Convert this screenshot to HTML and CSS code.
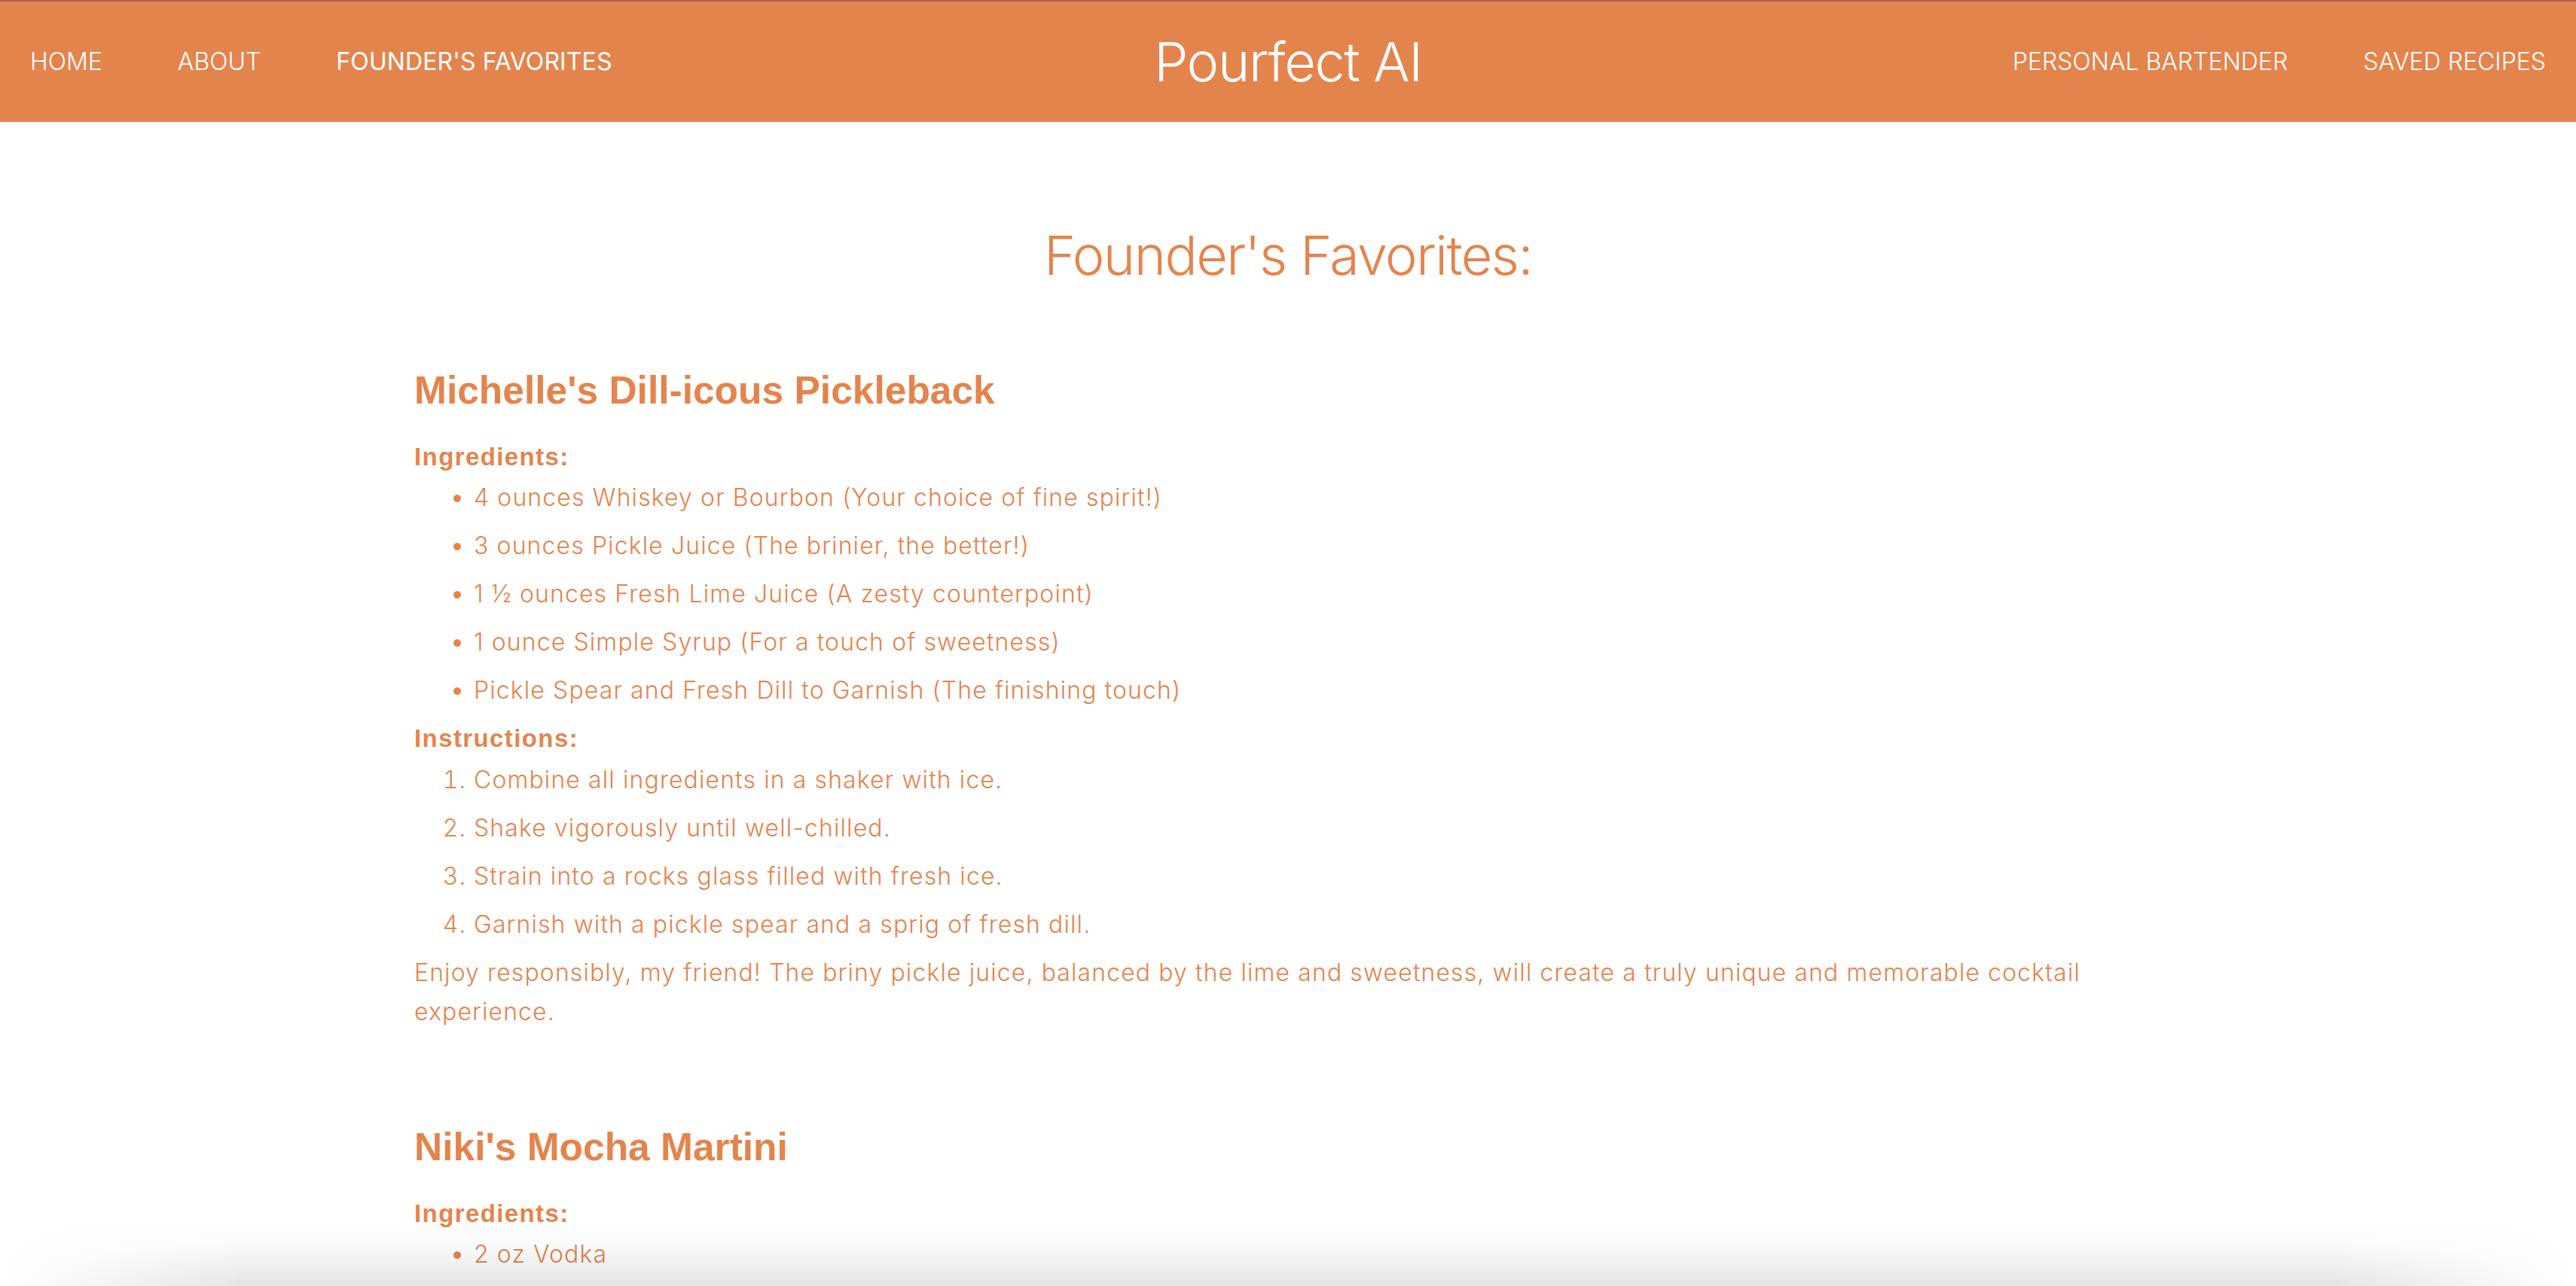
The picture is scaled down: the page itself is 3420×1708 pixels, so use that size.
FILE: index.html
```html
<!DOCTYPE html>
<html lang="en">
<head>
<meta charset="utf-8">
<title>Pourfect AI - Founder's Favorites</title>
<link rel="stylesheet" href="styles.css">
</head>
<body>
<header class="topbar">
  <nav class="nav nav-left">
    <a class="nav-link" href="#">HOME</a>
    <a class="nav-link" href="#">ABOUT</a>
    <a class="nav-link nav-link-active" href="#">FOUNDER'S FAVORITES</a>
  </nav>
  <div class="brand">Pourfect AI</div>
  <nav class="nav nav-right">
    <a class="nav-link" href="#">PERSONAL BARTENDER</a>
    <a class="nav-link" href="#">SAVED RECIPES</a>
  </nav>
</header>

<main class="content">
  <h1 class="page-title">Founder's Favorites:</h1>

  <section class="recipe">
    <h2 class="recipe-title">Michelle's Dill-icous Pickleback</h2>
    <h3 class="recipe-label">Ingredients:</h3>
    <ul class="recipe-list">
      <li>4 ounces Whiskey or Bourbon (Your choice of fine spirit!)</li>
      <li>3 ounces Pickle Juice (The brinier, the better!)</li>
      <li>1 ½ ounces Fresh Lime Juice (A zesty counterpoint)</li>
      <li>1 ounce Simple Syrup (For a touch of sweetness)</li>
      <li>Pickle Spear and Fresh Dill to Garnish (The finishing touch)</li>
    </ul>
    <h3 class="recipe-label">Instructions:</h3>
    <ol class="recipe-list">
      <li>Combine all ingredients in a shaker with ice.</li>
      <li>Shake vigorously until well-chilled.</li>
      <li>Strain into a rocks glass filled with fresh ice.</li>
      <li>Garnish with a pickle spear and a sprig of fresh dill.</li>
    </ol>
    <p class="recipe-note">Enjoy responsibly, my friend! The briny pickle juice, balanced by the lime and sweetness, will create a truly unique and memorable cocktail experience.</p>
  </section>

  <section class="recipe">
    <h2 class="recipe-title">Niki's Mocha Martini</h2>
    <h3 class="recipe-label">Ingredients:</h3>
    <ul class="recipe-list">
      <li>2 oz Vodka</li>
    </ul>
  </section>
</main>

<div class="window-shade"></div>
</body>
</html>
```

FILE: styles.css
```css
html, body {
  margin: 0;
  padding: 0;
  background: #ffffff;
}

body {
  font-family: "Liberation Sans", Arial, sans-serif;
  color: #e4844d;
  overflow: hidden;
}

.topbar {
  height: 160px;
  border-top: 2px solid #b85c52;
  background: #e4844d;
  display: flex;
  align-items: center;
  justify-content: space-between;
  padding: 0 40px;
  position: relative;
}

.nav {
  display: flex;
  gap: 100px;
  flex: 1;
}

.nav-right {
  justify-content: flex-end;
}

.nav-link {
  color: #ffffff;
  text-decoration: none;
  font-family: "Inter", "Liberation Sans", sans-serif;
  font-size: 32px;
  line-height: 40px;
  font-weight: 300;
  letter-spacing: 0;
}

.nav-link-active {
  font-weight: 400;
  letter-spacing: 0.1px;
}

.brand {
  color: #ffffff;
  font-family: "Inter", "Liberation Sans", sans-serif;
  font-size: 72px;
  line-height: 86px;
  font-weight: 300;
  letter-spacing: -1.4px;
  text-align: center;
}

.content {
  width: 2320px;
  margin: 0 auto;
}

.page-title {
  margin: 134px 0 0;
  font-family: "Inter", "Liberation Sans", sans-serif;
  font-size: 72px;
  line-height: 86px;
  font-weight: 300;
  letter-spacing: -1.6px;
  text-align: center;
}

.recipe {
  margin-top: 105px;
}

.recipe + .recipe {
  margin-top: 122px;
}

.recipe-title {
  margin: 0 0 32px;
  font-size: 51.5px;
  line-height: 62px;
  font-weight: 700;
}

.recipe-label {
  margin: 0;
  font-size: 33px;
  line-height: 52px;
  font-weight: 700;
  letter-spacing: 1.4px;
}

.recipe-list {
  margin: 2px 0 0;
  padding-left: 79px;
  font-family: "Inter", "Liberation Sans", sans-serif;
  font-weight: 300;
  font-size: 32px;
  line-height: 52px;
  letter-spacing: 1.1px;
}

ol.recipe-list {
  margin-top: 3px;
}

.recipe-list li {
  margin-bottom: 12px;
}

.recipe-note {
  margin: 0;
  font-family: "Inter", "Liberation Sans", sans-serif;
  font-weight: 300;
  font-size: 32px;
  line-height: 52px;
  letter-spacing: 1.1px;
}

.window-shade {
  position: fixed;
  left: 0;
  right: 0;
  bottom: 0;
  height: 90px;
  pointer-events: none;
  background: linear-gradient(to bottom, rgba(0, 0, 0, 0) 0%, rgba(0, 0, 0, 0.02) 40%, rgba(0, 0, 0, 0.1) 100%);
  -webkit-mask-image: linear-gradient(to right, transparent 0, #000 320px, #000 calc(100% - 320px), transparent 100%);
  mask-image: linear-gradient(to right, transparent 0, #000 320px, #000 calc(100% - 320px), transparent 100%);
  border-radius: 0 0 18px 18px;
}
```
